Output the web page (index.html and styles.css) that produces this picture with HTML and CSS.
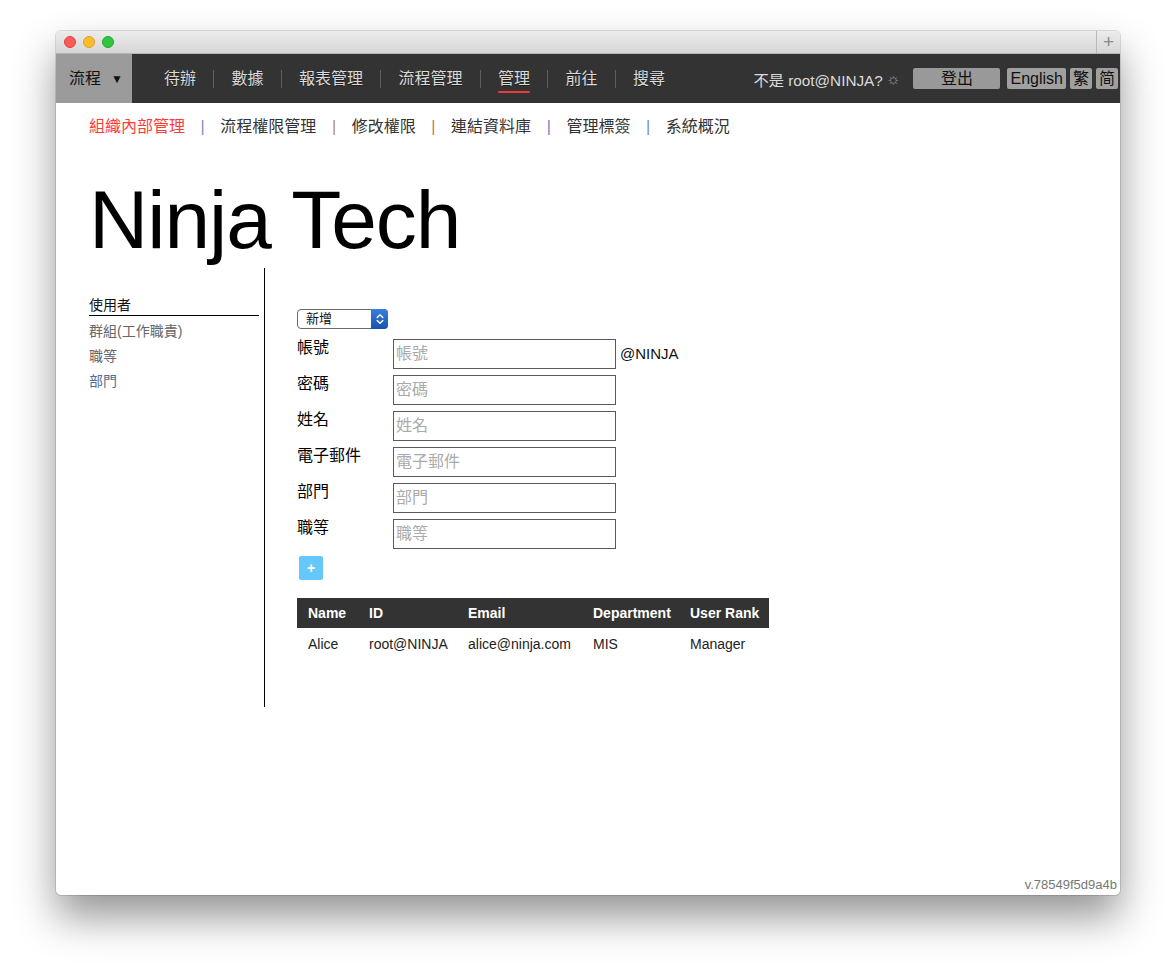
FILE: index.html
```html
<!DOCTYPE html>
<html lang="zh-Hant">
<head>
<meta charset="utf-8">
<title>Ninja Tech</title>
<link rel="stylesheet" href="styles.css">
</head>
<body>
<div class="stage">
  <div class="window">
    <div class="titlebar">
      <div class="lights">
        <span class="light red"></span>
        <span class="light yellow"></span>
        <span class="light green"></span>
      </div>
      <div class="newtab">+</div>
    </div>

    <nav class="topnav">
      <div class="flowmenu">流程<span class="caret">▼</span></div>
      <ul class="mainlinks">
        <li>待辦</li><li class="sep"></li>
        <li>數據</li><li class="sep"></li>
        <li>報表管理</li><li class="sep"></li>
        <li>流程管理</li><li class="sep"></li>
        <li class="active">管理</li><li class="sep"></li>
        <li>前往</li><li class="sep"></li>
        <li>搜尋</li>
      </ul>
      <div class="account">
        <span class="who">不是 root@NINJA?</span>
        <span class="gear">☼</span>
        <button class="btn logout">登出</button>
        <button class="btn lang">English</button>
        <button class="btn lang">繁</button>
        <button class="btn lang">简</button>
      </div>
    </nav>

    <main class="content">
      <div class="subnav">
        <span class="sublink current">組織內部管理</span><span class="bar b1">|</span>
        <span class="sublink">流程權限管理</span><span class="bar b2">|</span>
        <span class="sublink">修改權限</span><span class="bar b3">|</span>
        <span class="sublink">連結資料庫</span><span class="bar b4">|</span>
        <span class="sublink">管理標簽</span><span class="bar b5">|</span>
        <span class="sublink">系統概況</span>
      </div>

      <h1 class="org-title">Ninja Tech</h1>

      <div class="layout">
        <aside class="sidebar">
          <div class="side-head">使用者</div>
          <ul class="side-list">
            <li class="first">群組(工作職責)</li>
            <li>職等</li>
            <li class="blue">部門</li>
          </ul>
        </aside>

        <section class="panel">
          <div class="select-wrap">
            <select class="mode">
              <option>新增</option>
            </select>
            <span class="select-arrow">
              <svg width="8" height="12" viewBox="0 0 8 12"><path d="M1.2 4.6 L4 1.8 L6.8 4.6 M1.2 7.4 L4 10.2 L6.8 7.4" fill="none" stroke="#fff" stroke-width="1.4" stroke-linecap="round" stroke-linejoin="round"/></svg>
            </span>
          </div>

          <form class="userform">
            <div class="row"><label>帳號</label><input type="text" placeholder="帳號"><span class="suffix">@NINJA</span></div>
            <div class="row"><label>密碼</label><input type="text" placeholder="密碼"></div>
            <div class="row"><label>姓名</label><input type="text" placeholder="姓名"></div>
            <div class="row"><label>電子郵件</label><input type="text" placeholder="電子郵件"></div>
            <div class="row"><label>部門</label><input type="text" placeholder="部門"></div>
            <div class="row"><label>職等</label><input type="text" placeholder="職等"></div>
          </form>

          <button class="addbtn">+</button>

          <table class="users">
            <colgroup>
              <col class="c1"><col class="c2"><col class="c3"><col class="c4"><col class="c5">
            </colgroup>
            <thead>
              <tr><th>Name</th><th>ID</th><th>Email</th><th>Department</th><th>User Rank</th></tr>
            </thead>
            <tbody>
              <tr><td>Alice</td><td>root@NINJA</td><td>alice@ninja.com</td><td>MIS</td><td>Manager</td></tr>
            </tbody>
          </table>
        </section>
      </div>

      <footer class="version">v.78549f5d9a4b</footer>
    </main>
  </div>
</div>
</body>
</html>
```
FILE: styles.css
```css
* { box-sizing: border-box; }

html, body {
  margin: 0;
  padding: 0;
  background: #ffffff;
}

body {
  font-family: "Liberation Sans", "Noto Sans CJK TC", sans-serif;
  color: #111;
}

.stage {
  padding: 31px 56px 0 56px;
  height: 975px;
  overflow: hidden;
}

.window {
  width: 1064px;
  height: 864px;
  border-radius: 5px;
  overflow: hidden;
  background: #fff;
  display: flex;
  flex-direction: column;
  box-shadow: 0 22px 42px rgba(0, 0, 0, 0.42), 0 0 0 1px rgba(0, 0, 0, 0.12);
}

/* Title bar */
.titlebar {
  height: 23px;
  flex: none;
  display: flex;
  align-items: center;
  justify-content: space-between;
  background: linear-gradient(#ececec, #d6d6d6);
  border-bottom: 1px solid #b4b4b4;
}

.lights {
  display: flex;
  gap: 7px;
  padding-left: 8px;
}

.light {
  width: 12px;
  height: 12px;
  border-radius: 50%;
}
.light.red { background: #fc5b57; border: 1px solid #e0443e; }
.light.yellow { background: #fdbb2e; border: 1px solid #dea123; }
.light.green { background: #2fc640; border: 1px solid #1ea82e; }

.newtab {
  width: 24px;
  height: 22px;
  border-left: 1px solid #b8b8b8;
  color: #8a8a8a;
  font-size: 19px;
  line-height: 21px;
  text-align: center;
  font-weight: 300;
}

/* Top nav */
.topnav {
  height: 49px;
  flex: none;
  background: #333333;
  display: flex;
  align-items: center;
  font-size: 16px;
}

.flowmenu {
  width: 76px;
  height: 49px;
  background: #9b9b9b;
  color: #111;
  line-height: 49px;
  padding-left: 13px;
  white-space: nowrap;
}

.caret {
  font-size: 12px;
  margin-left: 10px;
  vertical-align: 1px;
}

.mainlinks {
  list-style: none;
  margin: 0 0 0 32px;
  padding: 0;
  display: flex;
  align-items: center;
  color: #dadada;
  text-shadow: 0 1px 0 rgba(0, 0, 0, 0.4);
}

.mainlinks li {
  line-height: 20px;
  position: relative;
}

.mainlinks .sep {
  width: 1px;
  height: 18px;
  background: #5f5f5f;
  margin: 0 17.25px;
}

.mainlinks .active::after {
  content: "";
  position: absolute;
  left: 0;
  right: 0;
  bottom: -4px;
  height: 2px;
  background: #ee3a3a;
  border-radius: 1px;
}

.account {
  margin-left: auto;
  display: flex;
  align-items: center;
  padding-right: 2px;
}

.who {
  color: #dadada;
  font-size: 15.3px;
}

.gear {
  color: #9a9a9a;
  font-size: 16px;
  margin-left: 3px;
  margin-right: 13px;
}

.btn {
  font-family: inherit;
  font-size: 16px;
  height: 21px;
  line-height: 21px;
  padding: 0;
  border: none;
  border-radius: 2px;
  background: #a0a0a0;
  color: #111;
  margin-left: 4px;
}

.btn.logout {
  width: 87px;
  margin-left: 0;
  margin-right: 3px;
  background: #999999;
}

.btn.lang {
  padding: 0 3px;
  min-width: 22px;
}

/* Content */
.content {
  flex: 1;
  display: flex;
  flex-direction: column;
  padding-left: 33px;
}

.subnav {
  padding-top: 15px;
  line-height: 18px;
  font-size: 16px;
  color: #333;
  display: flex;
  align-items: center;
}

.sublink.current { color: #ff3a3a; }

.bar {
  margin: 0 15.6px;
  font-size: 16px;
}
.bar.b1 { color: #6f8fbf; }
.bar.b2 { color: #b98a5e; }
.bar.b3 { color: #b9775c; }
.bar.b4 { color: #7b7bbf; }
.bar.b5 { color: #6f8fbf; }

.org-title {
  margin: 43px 0 0 0;
  font-size: 82px;
  line-height: 82px;
  height: 82px;
  font-weight: normal;
  letter-spacing: -1px;
  color: #000;
}

.layout {
  margin-top: 7px;
  height: 439px;
  display: flex;
}

.sidebar {
  width: 176px;
  padding-top: 28px;
  padding-right: 5px;
  border-right: 1px solid #000;
  font-size: 14px;
}

.side-head {
  line-height: 19px;
  border-bottom: 1px solid #000;
  color: #111;
}

.side-list {
  list-style: none;
  margin: 0;
  padding: 0;
}

.side-list li {
  line-height: 25px;
  color: #666;
}
.side-list li.first { margin-top: 3px; }
.side-list li.blue { color: #4f6e94; }

.panel {
  padding: 41px 0 0 32px;
  flex: 1;
}

.select-wrap {
  position: relative;
  width: 91px;
  height: 20px;
}

.mode {
  appearance: none;
  -webkit-appearance: none;
  width: 91px;
  height: 20px;
  border: 1px solid #6a6a6a;
  border-radius: 4px;
  background: #fff;
  font-family: inherit;
  font-size: 13px;
  padding: 0 0 0 8px;
  color: #111;
  line-height: 18px;
}

.select-arrow {
  position: absolute;
  right: 0;
  top: 0;
  width: 17px;
  height: 20px;
  border-radius: 0 4px 4px 0;
  background: linear-gradient(#3d7fd8, #1652b0);
  display: flex;
  align-items: center;
  justify-content: center;
}

.userform {
  margin: 10px 0 0 0;
  display: flex;
  flex-direction: column;
  gap: 6px;
}

.row {
  display: flex;
  align-items: flex-start;
  height: 30px;
}

.row label {
  width: 96px;
  font-size: 16px;
  line-height: 18px;
  color: #000;
}

.row input {
  width: 223px;
  height: 30px;
  border: 1px solid #5a5a5a;
  border-radius: 0;
  padding: 0 2px;
  font-family: inherit;
  font-size: 16px;
  color: #111;
  outline: none;
}

.row input::placeholder { color: #aaa; }

.suffix {
  margin-left: 4px;
  font-size: 15px;
  line-height: 30px;
  color: #111;
}

.addbtn {
  display: block;
  margin: 7px 0 0 2px;
  width: 24px;
  height: 24px;
  border: none;
  border-radius: 2px;
  background: #66c8fa;
  color: #fff;
  font-family: inherit;
  font-weight: bold;
  font-size: 14px;
  line-height: 24px;
  padding: 0;
}

.users {
  margin-top: 18px;
  width: 472px;
  border-collapse: collapse;
  table-layout: fixed;
  font-size: 14px;
}

.users .c1 { width: 61px; }
.users .c2 { width: 99px; }
.users .c3 { width: 125px; }
.users .c4 { width: 97px; }
.users .c5 { width: 90px; }

.users th {
  background: #333;
  color: #fff;
  font-weight: bold;
  text-align: left;
  height: 30px;
  padding: 0 0 0 11px;
  white-space: nowrap;
}

.users td {
  height: 32px;
  padding: 0 0 0 11px;
  color: #222;
  white-space: nowrap;
}

.version {
  margin-top: auto;
  align-self: flex-end;
  padding: 0 3px 3px 0;
  font-size: 13px;
  line-height: 15px;
  color: #777;
}
```
